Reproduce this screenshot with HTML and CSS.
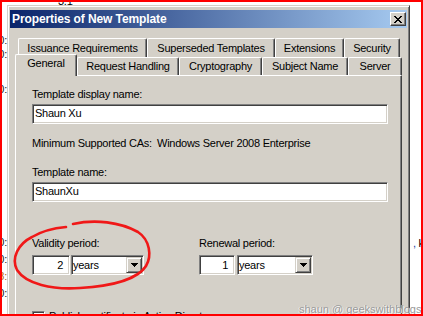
FILE: index.html
```html
<!DOCTYPE html>
<html lang="en">
<head>
    <meta charset="UTF-8">
    <meta name="viewport" content="width=device-width, initial-scale=1.0">
    <title>Properties of New Template</title>
    <link rel="stylesheet" href="styles.css">
</head>
<body>
    <div class="desktop">
        <!-- cut-off log text left of the dialog -->
        <div class="gutter-left">
            <div class="frag f1">10:</div>
            <div class="frag f2">10:</div>
            <div class="frag f3">10:</div>
            <div class="frag f4">10:</div>
            <div class="frag f5">10:</div>
            <div class="frag f6 orange">18:</div>
            <div class="frag f5">10:</div>
        </div>

        <div class="middle">
            <div class="top-note"><span>3.1</span></div>

            <div class="window">
                <div class="titlebar">
                    <span class="title">Properties of New Template</span>
                    <div class="close">
                        <svg width="8" height="7" viewBox="0 0 8 7"><path d="M0 0h2v1H0z M6 0h2v1H6z M1 1h2v1H1z M5 1h2v1H5z M2 2h4v1H2z M3 3h2v1H3z M2 4h4v1H2z M1 5h2v1H1z M5 5h2v1H5z M0 6h2v1H0z M6 6h2v1H6z" fill="#000"/></svg>
                    </div>
                </div>

                <div class="tabs">
                    <div class="tab-row back">
                        <div class="tab w-issuance">Issuance Requirements</div>
                        <div class="tab w-superseded">Superseded Templates</div>
                        <div class="tab w-extensions">Extensions</div>
                        <div class="tab w-security">Security</div>
                    </div>
                    <div class="tab-row front">
                        <div class="tab selected w-general">General</div>
                        <div class="tab w-request">Request Handling</div>
                        <div class="tab w-crypto">Cryptography</div>
                        <div class="tab w-subject">Subject Name</div>
                        <div class="tab w-server">Server</div>
                    </div>

                    <div class="page">
                        <div class="label">Template display name:</div>
                        <div class="field">Shaun Xu</div>

                        <div class="info">
                            <span class="info-key">Minimum Supported CAs:</span>
                            <span>Windows Server 2008 Enterprise</span>
                        </div>

                        <div class="label second">Template name:</div>
                        <div class="field">ShaunXu</div>

                        <div class="periods">
                            <div class="period">
                                <div class="label">Validity period:</div>
                                <div class="period-inputs">
                                    <div class="field spin spin-wide">2</div>
                                    <div class="field combo combo-short">
                                        <span class="combo-text">years</span>
                                        <span class="drop"><svg width="7" height="4" viewBox="0 0 7 4"><path d="M0 0h7v1H0z M1 1h5v1H1z M2 2h3v1H2z M3 3h1v1H3z" fill="#000"/></svg></span>
                                    </div>
                                </div>
                            </div>
                            <div class="period">
                                <div class="label">Renewal period:</div>
                                <div class="period-inputs">
                                    <div class="field spin spin-narrow">1</div>
                                    <div class="field combo combo-long">
                                        <span class="combo-text">years</span>
                                        <span class="drop"><svg width="7" height="4" viewBox="0 0 7 4"><path d="M0 0h7v1H0z M1 1h5v1H1z M2 2h3v1H2z M3 3h1v1H3z" fill="#000"/></svg></span>
                                    </div>
                                </div>
                            </div>
                        </div>

                        <div class="check-row">
                            <span class="checkbox"></span>
                            <span class="check-text">Publish certificate in Active Directory</span>
                        </div>
                    </div>
                </div>
            </div>
        </div>

        <div class="gutter-right">
            <div class="frag-right"><span class="comma">,</span> k</div>
        </div>
    </div>

    <!-- hand drawn mark around the validity period -->
    <svg class="scribble" width="423" height="316" viewBox="0 0 423 316">
        <path d="M73 224 C 95 219, 120 222, 138 232 C 150 240, 152 256, 146 266 C 138 279, 112 286, 80 288 C 52 290, 26 284, 17 270 C 11 258, 18 244, 32 237 C 42 231, 55 228, 66 227" fill="none" stroke="#f01818" stroke-width="2.6" stroke-linecap="round"/>
    </svg>

    <div class="watermark">shaun @ geekswithblogs</div>
</body>
</html>
```

FILE: styles.css
```css
body {
    margin: 0;
    width: 423px;
    height: 316px;
    box-sizing: border-box;
    border: 2px solid #ff0000;
    background: #fff;
    overflow: hidden;
    position: relative;
    font-family: "Liberation Sans", Arial, sans-serif;
    font-size: 11px;
    letter-spacing: -0.25px;
    color: #000;
}

.desktop {
    display: flex;
    height: 100%;
}

/* Left strip with cut-off text */
.gutter-left {
    width: 5px;
    flex: none;
    overflow: hidden;
}
.frag {
    height: 13px;
    line-height: 13px;
    display: flex;
    justify-content: flex-end;
    white-space: nowrap;
    color: #222;
}
.f1 { margin-top: 32px; }
.f2 { margin-top: 1px; }
.f3 { margin-top: 22px; }
.f4 { margin-top: 140px; }
.f5 { margin-top: 4px; }
.f6 { margin-top: 4px; }
.orange { color: #b8600c; }

.middle {
    width: 403px;
    flex: none;
    display: flex;
    flex-direction: column;
}
.top-note {
    flex: none;
    height: 3px;
    overflow: hidden;
    padding-left: 51px;
}
.top-note span {
    display: block;
    line-height: 13px;
    margin-top: -7px;
}

/* Dialog window */
.window {
    flex: none;
    height: 320px;
    background: #d4d0c8;
    border: 1px solid;
    border-color: #d4d0c8 #404040 #404040 #d4d0c8;
    box-shadow: inset 1px 1px #fff, inset -1px -1px #808080;
    padding: 4px 2px 0 2px;
}
.titlebar {
    height: 18px;
    display: flex;
    align-items: center;
    justify-content: space-between;
    background: linear-gradient(to right, #0a246a, #a6caf0);
    padding: 0 1px 0 2px;
}
.title {
    color: #fff;
    font-weight: bold;
    font-size: 12px;
    letter-spacing: -0.1px;
    line-height: 18px;
}
.close {
    width: 16px;
    height: 14px;
    box-sizing: border-box;
    background: #d4d0c8;
    border: 1px solid;
    border-color: #fff #404040 #404040 #fff;
    box-shadow: inset -1px -1px #808080;
    display: flex;
    align-items: center;
    justify-content: center;
}
.close svg { display: block; }

/* Tab control */
.tabs {
    margin: 10px 0 0 5px;
    width: 387px;
}
.tab-row {
    display: flex;
}
.tab-row.back {
    height: 19px;
    padding-left: 3px;
}
.tab-row.front {
    height: 18px;
}
.tab {
    flex: none;
    box-sizing: border-box;
    background: #d4d0c8;
    border-top: 1px solid #fff;
    border-left: 1px solid #fff;
    border-right: 1px solid #404040;
    box-shadow: inset -1px 0 #808080;
    border-radius: 2px 2px 0 0;
    text-align: center;
    line-height: 13px;
    white-space: nowrap;
}
.back .tab {
    height: 19px;
    padding-top: 3px;
}
.front .tab {
    height: 18px;
    padding-top: 2px;
}
.front .tab.selected {
    height: 22px;
    margin-top: -3px;
    position: relative;
    z-index: 1;
}
.w-issuance { width: 129px; }
.w-superseded { width: 128px; }
.w-extensions { width: 69px; }
.w-security { width: 56px; }
.w-general { width: 62px; }
.w-request { width: 102px; }
.w-crypto { width: 83px; }
.w-subject { width: 86px; }
.w-server { width: 54px; }

.page {
    height: 260px;
    background: #d4d0c8;
    border-top: 1px solid #fff;
    border-left: 1px solid #fff;
    border-right: 1px solid #404040;
    box-shadow: inset -1px 0 #808080;
    padding: 12px 12px 0 16px;
}

.label {
    line-height: 13px;
    margin-bottom: 3px;
}
.label.second {
    margin-top: 16px;
}

.field {
    width: 356px;
    height: 20px;
    box-sizing: border-box;
    background: #fff;
    border: 1px solid;
    border-color: #808080 #fff #fff #808080;
    box-shadow: inset 1px 1px #404040, inset -1px -1px #d4d0c8;
    padding: 2px 2px 0;
    line-height: 13px;
    white-space: nowrap;
}

.info {
    display: flex;
    margin-top: 13px;
    line-height: 13px;
}
.info-key {
    width: 125px;
    flex: none;
}

/* Validity / renewal */
.periods {
    display: grid;
    grid-template-columns: 167px auto;
    margin-top: 35px;
}
.period .label {
    margin-bottom: 5px;
}
.period-inputs {
    display: flex;
}
.spin {
    text-align: right;
    padding: 3px 6px 0 0;
}
.spin-wide { width: 38px; }
.spin-narrow { width: 36px; }

.combo {
    display: flex;
    align-items: flex-start;
    padding: 0 0 0 1px;
}
.combo-short { width: 73px; margin-left: 1px; }
.combo-long { width: 76px; margin-left: 2px; }
.combo-text {
    flex: 1;
    padding-top: 3px;
}
.drop {
    flex: none;
    width: 16px;
    height: 16px;
    margin: 1px;
    box-sizing: border-box;
    background: #d4d0c8;
    border: 1px solid;
    border-color: #d4d0c8 #404040 #404040 #d4d0c8;
    box-shadow: inset 1px 1px #fff, inset -1px -1px #808080;
    display: flex;
    align-items: center;
    justify-content: center;
}
.drop svg { display: block; }

.check-row {
    display: flex;
    align-items: flex-start;
    margin-top: 36px;
}
.checkbox {
    width: 13px;
    height: 13px;
    box-sizing: border-box;
    background: #fff;
    border: 1px solid;
    border-color: #808080 #fff #fff #808080;
    box-shadow: inset 1px 1px #404040, inset -1px -1px #d4d0c8;
}
.check-text {
    margin: -1px 0 0 4px;
    line-height: 13px;
}

/* Right strip */
.gutter-right {
    flex: 1;
    overflow: hidden;
    padding: 235px 0 0 3px;
}
.frag-right {
    line-height: 13px;
    white-space: nowrap;
}
.comma { color: #1a3aa0; }

/* Overlays */
.scribble {
    position: absolute;
    left: -2px;
    top: -2px;
    pointer-events: none;
}
.watermark {
    position: absolute;
    left: 297px;
    top: 301px;
    line-height: 13px;
    letter-spacing: 0;
    white-space: nowrap;
    color: #9a9a9a;
    text-shadow: 1px 1px 0 rgba(255, 255, 255, 0.85), -1px 0 0 rgba(255, 255, 255, 0.6);
}
```
